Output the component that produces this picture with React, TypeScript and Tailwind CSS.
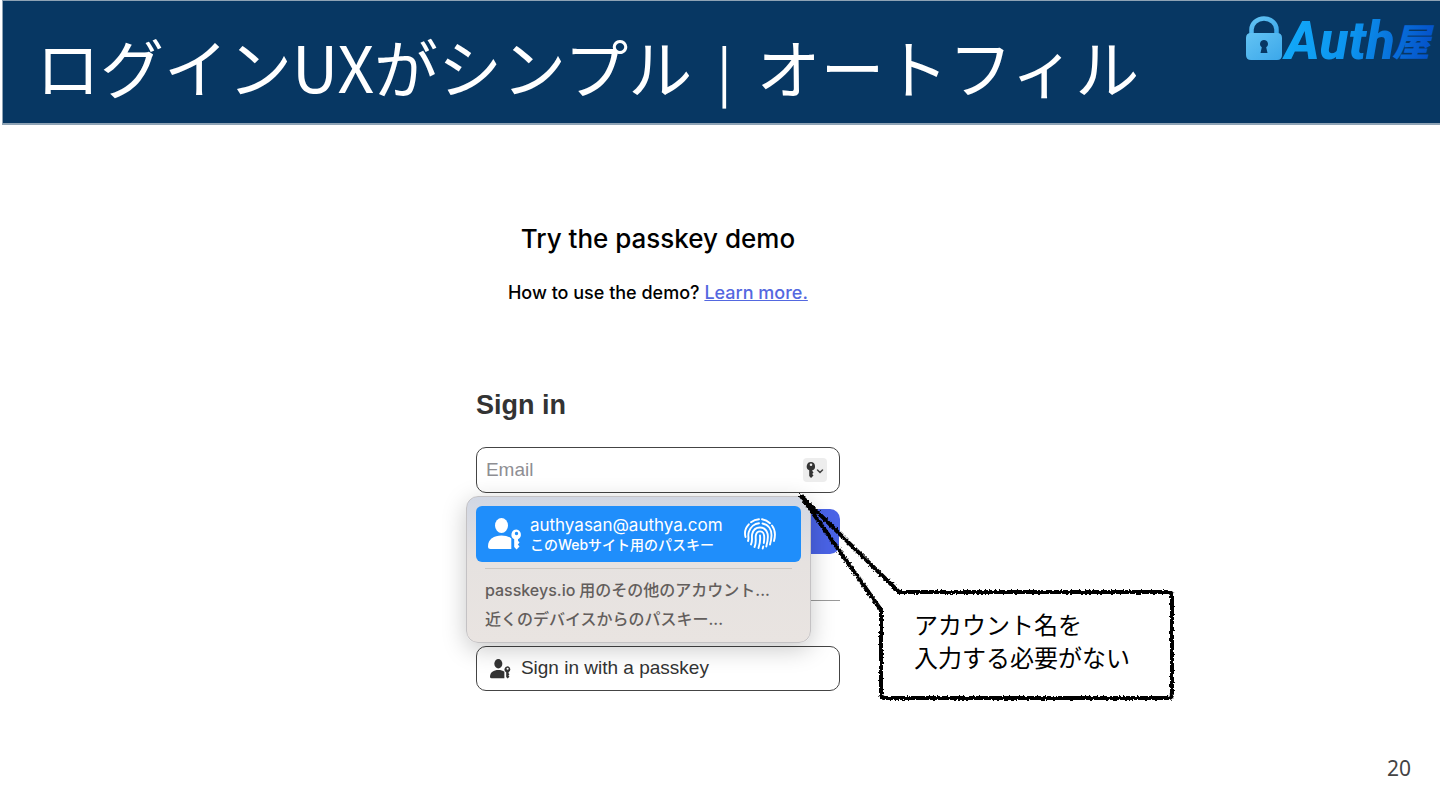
import type { ReactNode } from "react";

function Logo() {
  return (
    <svg
      className="mt-3 mr-1 h-14 w-48 shrink-0 overflow-visible"
      viewBox="0 0 192 56"
      role="img"
      aria-label="Auth屋"
    >
      <defs>
        <linearGradient id="lock" x1="0" x2="1" y1="0" y2="1">
          <stop offset="0" stopColor="#63c3f3" />
          <stop offset="1" stopColor="#3ba7ea" />
        </linearGradient>
        <linearGradient id="word" gradientUnits="userSpaceOnUse" x1="45" x2="188" y1="10" y2="40">
          <stop offset="0" stopColor="#12a8f8" />
          <stop offset="0.45" stopColor="#0c93ee" />
          <stop offset="1" stopColor="#0450c8" />
        </linearGradient>
      </defs>
      <path
        d="M7.500 22V16.500a12.500 11 0 0 1 25 0V22"
        fill="none"
        stroke="url(#lock)"
        strokeWidth="4.500"
      />
      <path
        fill="url(#lock)"
        fillRule="evenodd"
        d="M7 20h26q5 0 5 5v17q0 5-5 5H7q-5 0-5-5V25q0-5 5-5zM20 27a4 4 0 0 0-2.200 7.300L16.500 40h7l-1.300-5.700A4 4 0 0 0 20 27z"
      />
      <text
        x="41"
        y="46"
        fill="url(#word)"
        className="font-[Roboto,sans-serif] text-[53px] font-extrabold italic"
      >
        Auth
      </text>
      <text
        x="148"
        y="43"
        fill="url(#word)"
        className="font-['Noto_Sans_CJK_JP',sans-serif] text-[38px] font-black italic"
      >
        屋
      </text>
    </svg>
  );
}

function PersonKeyIcon({ className }: { className: string }) {
  return (
    <svg className={className} viewBox="0 0 34 32" fill="currentColor" aria-hidden="true">
      <ellipse cx="13.500" cy="7.500" rx="6.500" ry="7.500" />
      <path d="M0 28.500C0 21 6 17.500 13.500 17.500c4 0 7.500 1 9.800 3V31H2.500Q0 31 0 28.500z" />
      <path
        fillRule="evenodd"
        d="M28.500 11.500a5.200 5.200 0 0 0-2.300 9.800V29l2.300 2.500 3-3-1.700-2 1.700-2-1.500-1.700v-1.500a5.200 5.200 0 0 0-1.500-9.800zm0 2.300a1.700 1.700 0 1 1 0 3.400 1.700 1.700 0 0 1 0-3.400z"
      />
    </svg>
  );
}

function KeyIcon() {
  return (
    <svg className="h-4 w-5" viewBox="0 0 20 16" aria-hidden="true">
      <path
        fill="#333"
        fillRule="evenodd"
        d="M6 0a4.300 4.300 0 0 0-1.800 8.200V14L6 16l2.500-2.500L7.200 12l1.300-1.500-1.200-1.500v-.7A4.300 4.300 0 0 0 6 0zm0 1.500a1.300 1.300 0 1 1 0 2.600 1.300 1.300 0 0 1 0-2.600z"
      />
      <path d="M12.500 8l2.500 2.500L17.500 8" fill="none" stroke="#444" strokeWidth="1.500" strokeLinecap="round" />
    </svg>
  );
}

function FingerprintIcon() {
  return (
    <svg
      className="h-8 w-8 shrink-0"
      viewBox="0 0 32 32"
      fill="none"
      stroke="currentColor"
      strokeWidth="1.900"
      strokeLinecap="round"
      aria-hidden="true"
    >
      <path d="M7 4.200A15 15 0 0 1 15 1.200M18 1.200a15 15 0 0 1 8 4" />
      <path d="M1.500 19c-1.300-5 .2-9.500 3.300-12.700M28 7.500c3.500 4.500 3.500 10 2 15.500" />
      <path d="M4 23c1.300-3-.5-5 .8-9C6.500 8.500 11 5.500 15 5.200M18.500 5.500c6 1.200 9.200 6 9 12-.1 3.500-.6 6-1.500 9" />
      <path d="M7 26.500c2-4 .3-7 1.200-10.500 2.300-9 13.500-8.500 15.400 0 .8 4-.2 8.500-1.300 12.500" />
      <path d="M10.500 29c2.200-5 .8-8 1.300-11.500 1-5.500 7.500-5.500 8.300 0 .4 3 0 5-.3 7.500" />
      <path d="M16 17.500c.5 5 .1 8-1.500 12.500M19.200 28.500l-.5 2" />
    </svg>
  );
}

function MenuItem({ children }: { children: ReactNode }) {
  return (
    <button
      type="button"
      className="block h-[29px] w-full pl-[9px] text-left text-[16px] leading-7 font-medium text-[#635e5c]"
    >
      {children}
    </button>
  );
}

function AutofillMenu() {
  return (
    <div className="absolute top-[49px] -left-[10px] w-[345px] rounded-xl border border-[#c4c2c4] bg-linear-to-b from-[#d1d7e4] via-[#e6e2e0] via-45% to-[#e9e4e1] px-[9px] pt-[9px] pb-[9px] font-[Inter,'Noto_Sans_CJK_JP',sans-serif] shadow-[0_6px_24px_rgba(0,0,0,0.22)]">
      <button
        type="button"
        className="flex h-14 w-full items-center rounded-md bg-[#1f8efb] pl-3 text-left text-white"
      >
        <PersonKeyIcon className="h-8 w-[34px] shrink-0" />
        <span className="ml-2 w-[214px] pt-0.5 whitespace-nowrap">
          <span className="block text-[17px] leading-5">authyasan@authya.com</span>
          <span className="block text-[14px] leading-5 font-medium">このWebサイト用のパスキー</span>
        </span>
        <FingerprintIcon />
      </button>
      <hr className="mx-[9px] my-1.5 border-[#cbc7c2]" />
      <MenuItem>
        <span className="mr-1">passkeys.io</span>用のその他のアカウント...
      </MenuItem>
      <MenuItem>近くのデバイスからのパスキー...</MenuItem>
    </div>
  );
}

function SignInForm() {
  return (
    <form className="w-[364px] shrink-0 font-['Liberation_Sans',Arial,sans-serif] text-[19px] text-[#333]">
      <h3 className="text-[27px] leading-8 font-bold">Sign in</h3>
      <div className="relative mt-[26px]">
        <input
          type="email"
          aria-label="Email"
          placeholder="Email"
          className="block h-[46px] w-full rounded-[10px] border border-[#444] bg-white px-[9px] placeholder:text-[#8e8e93]"
        />
        <button
          type="button"
          aria-label="Passwords"
          className="absolute top-[11px] right-[13px] flex size-6 items-center justify-center rounded bg-[#ededed]"
        >
          <KeyIcon />
        </button>
        <AutofillMenu />
      </div>
      <button
        type="button"
        aria-label="Continue"
        className="mt-4 block h-[45px] w-full rounded-[10px] bg-[#4a63e6]"
      />
      <hr className="mt-[46px] mb-[45px] border-[#999]" />
      <button
        type="button"
        className="flex h-[45px] w-full items-center rounded-[10px] border border-[#444] pl-[13px]"
      >
        <PersonKeyIcon className="h-5 w-[21px]" />
        <span className="ml-2.5">Sign in with a passkey</span>
      </button>
    </form>
  );
}

function Callout() {
  return (
    <aside className="relative mb-[-7px] ml-[41px] h-[106px] w-[291px] shrink-0 self-end">
      <svg
        className="pointer-events-none absolute -top-24 -left-20 h-[202px] w-[371px] overflow-visible"
        viewBox="0 0 371 202"
        aria-hidden="true"
      >
        <filter id="rough" x="-5%" y="-5%" width="110%" height="110%">
          <feTurbulence type="fractalNoise" baseFrequency="0.5" numOctaves="2" seed="4" />
          <feDisplacementMap in="SourceGraphic" scale="4" xChannelSelector="R" yChannelSelector="G" />
        </filter>
        <path d="M38 37L98 96H367q4 0 4 4v98q0 4-4 4H84q-4 0-4-4V114L38 55z" fill="#fff" />
        <path
          d="M0 0L98 96H367q4 0 4 4v98q0 4-4 4H84q-4 0-4-4V114z"
          fill="none"
          stroke="#000"
          strokeWidth="4"
          strokeLinejoin="round"
          filter="url(#rough)"
        />
      </svg>
      <p className="relative pt-[15px] pl-[33px] text-[24px] leading-[33px] text-black">
        アカウント名を
        <br />
        入力する必要がない
      </p>
    </aside>
  );
}

export default function App() {
  return (
    <div className="flex min-h-screen flex-col bg-white font-['Noto_Sans_CJK_JP',sans-serif]">
      <header className="ml-0.5 flex h-[125px] items-start justify-between border-t border-b-2 border-l border-[#8ea3b5] bg-[#073763]">
        <h1 className="pt-4 pl-[33px] text-[64px] leading-[96px] font-normal whitespace-nowrap text-white">
          ログインUXがシンプル
          <span className="mx-3 text-[56px]"> | </span>
          オートフィル
        </h1>
        <Logo />
      </header>

      <main className="flex-1 pt-[98px] pl-[33.05%]">
        <div className="w-[364px] text-center font-[Inter,sans-serif] text-black">
          <h2 className="text-[26px] leading-8 font-medium">Try the passkey demo</h2>
          <p className="mt-[26px] text-[18px] leading-6 font-medium">
            How to use the demo?{" "}
            <a href="#" className="text-[#5468e0] underline">
              Learn more.
            </a>
          </p>
        </div>
        <div className="mt-[84px] flex">
          <SignInForm />
          <Callout />
        </div>
      </main>

      <footer className="pr-[29px] pb-7 text-right font-['Noto_Sans',sans-serif] text-[21px] leading-7 text-[#444]">
        20
      </footer>
    </div>
  );
}
